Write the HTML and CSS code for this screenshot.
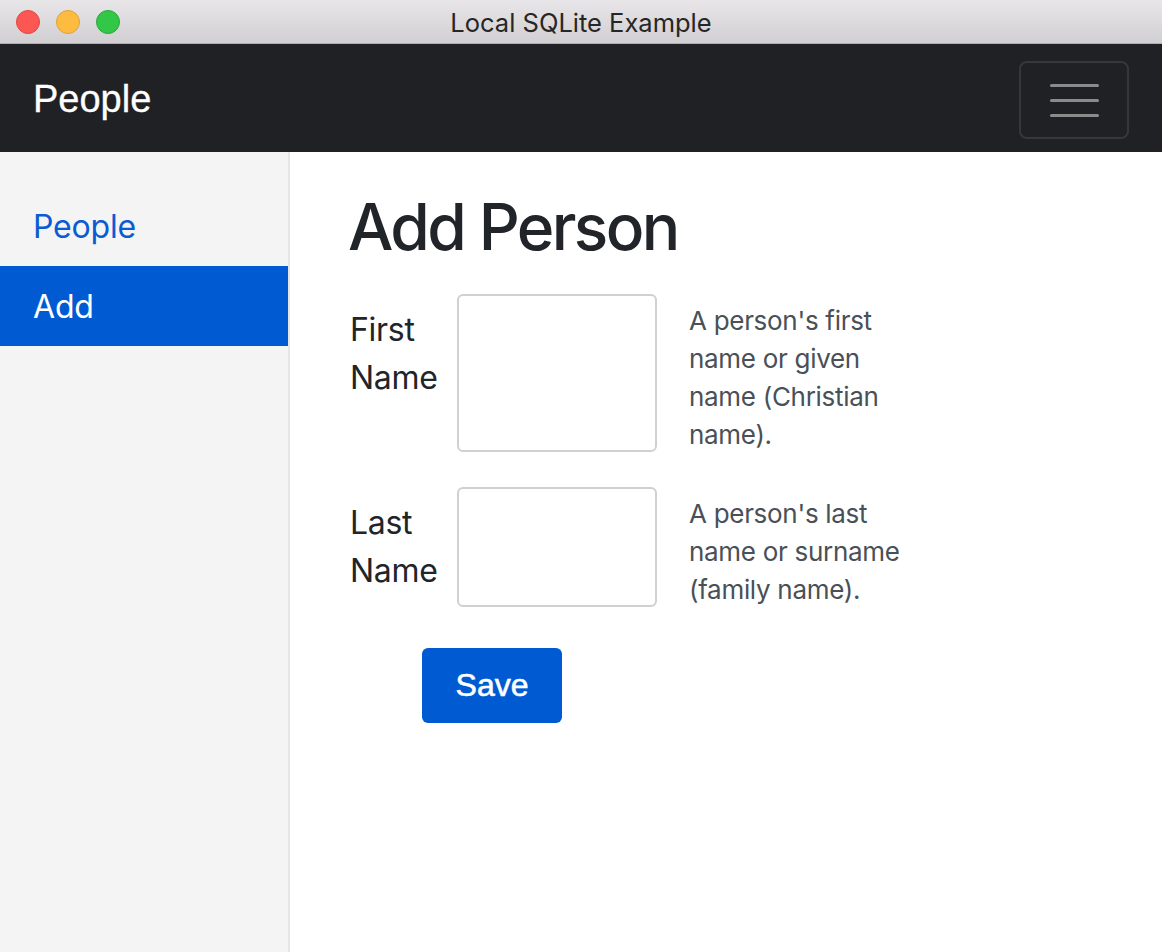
FILE: index.html
```html
<!DOCTYPE html>
<html lang="en">
<head>
<meta charset="utf-8">
<title>Local SQLite Example</title>
<link rel="stylesheet" href="styles.css">
</head>
<body>
<div class="window">
  <header class="titlebar">
    <div class="lights">
      <span class="light red"></span>
      <span class="light yellow"></span>
      <span class="light green"></span>
    </div>
    <div class="title">Local SQLite Example</div>
  </header>
  <nav class="navbar">
    <a class="brand">People</a>
    <button class="toggler" type="button" aria-label="Toggle navigation">
      <span class="bar"></span>
      <span class="bar"></span>
      <span class="bar"></span>
    </button>
  </nav>
  <div class="main">
    <aside class="sidebar">
      <a class="side-link">People</a>
      <a class="side-link active">Add</a>
    </aside>
    <section class="content">
      <h1 class="heading">Add Person</h1>
      <form class="form">
        <div class="row">
          <label class="label">First Name</label>
          <div class="input tall"></div>
          <p class="help">A person's first name or given name (Christian name).</p>
        </div>
        <div class="row row-last">
          <label class="label">Last Name</label>
          <div class="input short"></div>
          <p class="help">A person's last name or surname (family name).</p>
        </div>
        <div class="actions">
          <button class="save" type="button">Save</button>
        </div>
      </form>
    </section>
  </div>
</div>
</body>
</html>
```
FILE: styles.css
```css
* { box-sizing: border-box; }
html, body { margin: 0; padding: 0; }
body {
  width: 1162px;
  height: 952px;
  overflow: hidden;
  background: #ffffff;
  font-family: Inter, "Noto Sans", sans-serif;
  color: #212529;
}
.window {
  display: flex;
  flex-direction: column;
  height: 952px;
}
.titlebar {
  position: relative;
  height: 44px;
  flex: 0 0 44px;
  background: linear-gradient(#e8e6e8, #d1cfd1);
  border-bottom: 1px solid #b1afb1;
  display: flex;
  align-items: center;
  justify-content: center;
}
.lights {
  position: absolute;
  left: 16px;
  top: 10px;
  display: flex;
  gap: 16px;
}
.light {
  width: 24px;
  height: 24px;
  border-radius: 50%;
  display: block;
}
.red { background: #fc5753; border: 1px solid #de4a45; }
.yellow { background: #fdbc40; border: 1px solid #dea236; }
.green { background: #33c748; border: 1px solid #27a93a; }
.title {
  font-size: 25.5px;
  color: #262626;
  margin-top: 2px;
}
.navbar {
  height: 108px;
  flex: 0 0 108px;
  background: #202124;
  display: flex;
  align-items: center;
  justify-content: space-between;
  padding: 0 33px 0 33px;
}
.brand {
  font-family: "Liberation Sans", Arial, sans-serif;
  font-size: 38px;
  color: #ffffff;
  margin-top: 2px;
  -webkit-text-stroke: 0.3px #ffffff;
}
.toggler {
  width: 110px;
  height: 78px;
  margin-top: 4px;
  background: transparent;
  border: 2px solid rgba(255,255,255,0.1);
  border-radius: 8px;
  display: flex;
  flex-direction: column;
  align-items: center;
  justify-content: center;
  gap: 12px;
  padding: 0;
}
.bar {
  display: block;
  width: 49px;
  height: 3px;
  border-radius: 2px;
  background: #8b8b8c;
}
.main {
  flex: 1;
  display: flex;
}
.sidebar {
  width: 290px;
  flex: 0 0 290px;
  background: #f4f4f4;
  border-right: 2px solid #e6e6e6;
  padding-top: 34px;
  display: flex;
  flex-direction: column;
}
.side-link {
  height: 80px;
  display: flex;
  align-items: center;
  padding-left: 33px;
  font-size: 32px;
  color: #0a5bd4;
  letter-spacing: -0.2px;
}
.side-link.active {
  background: #005bd3;
  color: #ffffff;
}
.content {
  flex: 1;
  padding: 36px 0 0 58px;
}
.heading {
  margin: 0 0 29px 0;
  font-size: 64px;
  font-weight: 500;
  line-height: 77px;
  color: #212529;
  letter-spacing: -2.6px;
}
.form {
  display: flex;
  flex-direction: column;
}
.row {
  display: flex;
  align-items: flex-start;
  margin-bottom: 33px;
}
.row.row-last { margin-bottom: 39px; }
.label {
  width: 109px;
  padding: 12px 0 0 2px;
  font-size: 32px;
  line-height: 48px;
  color: #212529;
  letter-spacing: -0.3px;
}
.input {
  width: 200px;
  border: 2px solid #d0d0d0;
  border-radius: 6px;
  background: #fff;
}
.input.tall { height: 158px; }
.input.short { height: 120px; }
.help {
  margin: 0 0 0 32px;
  padding-top: 8px;
  width: 230px;
  font-size: 26px;
  line-height: 38px;
  color: #495057;
  letter-spacing: -0.3px;
}
.actions {
  padding-left: 74px;
}
.save {
  width: 140px;
  height: 75px;
  border: none;
  border-radius: 6px;
  background: #005bd3;
  color: #ffffff;
  font-family: "Liberation Sans", Arial, sans-serif;
  font-size: 32px;
  padding: 0;
  -webkit-text-stroke: 0.6px #ffffff;
}
```
